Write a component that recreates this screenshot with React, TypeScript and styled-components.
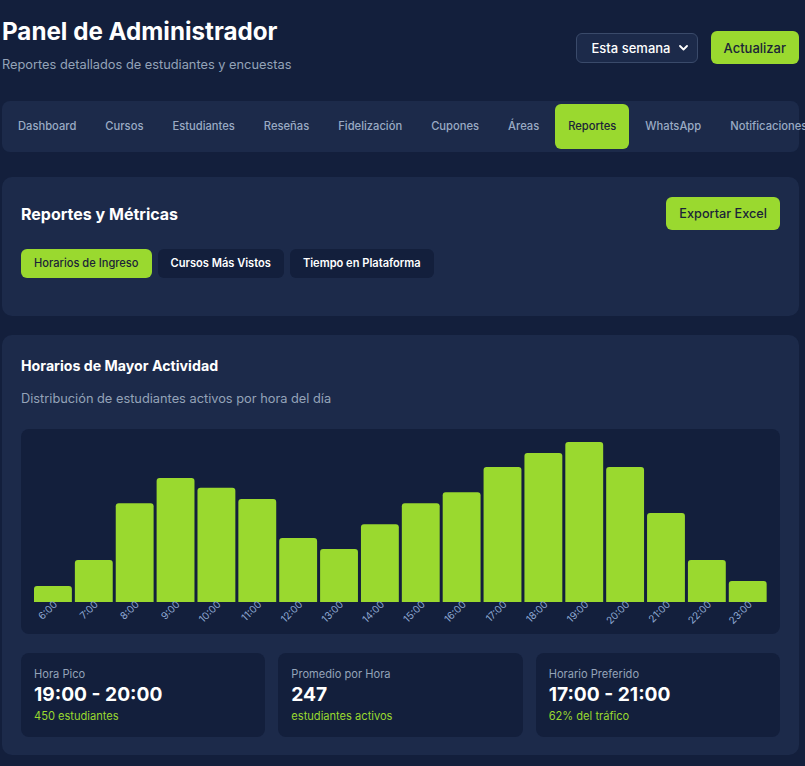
import React from 'react';
import styled, { createGlobalStyle } from 'styled-components';

const font = 'Inter, "Noto Sans", sans-serif';

const GlobalStyle = createGlobalStyle`
  html, body {
    margin: 0;
    padding: 0;
    background: #131f3c;
    overflow: hidden;
  }
  body {
    font-family: ${font};
    color: #fff;
  }
  * { box-sizing: border-box; }
`;

const Page = styled.div`
  width: 805px;
  padding: 16px 6px 0 2px;
`;

const Header = styled.header`
  display: flex;
  justify-content: space-between;
  align-items: center;
  margin-bottom: 26px;
`;

const Title = styled.h1`
  margin: 0;
  font-size: 24.2px;
  line-height: 32px;
  font-weight: 700;
`;

const Subtitle = styled.p`
  margin: 7px 0 0;
  font-size: 12.8px;
  line-height: 20px;
  color: #94a3b8;
`;

const Controls = styled.div`
  display: flex;
  align-items: center;
  gap: 13px;
  margin-top: 4px;
`;

const SelectWrap = styled.div`
  position: relative;
  width: 122px;
  height: 30px;
`;

const Select = styled.select`
  appearance: none;
  width: 100%;
  height: 100%;
  padding: 0 0 0 15px;
  background: #1c2a4a;
  border: 1px solid #3a4a6a;
  border-radius: 6px;
  color: #fff;
  font: 500 13px ${font};
  outline: none;
`;

const Chevron = styled.svg`
  position: absolute;
  right: 10px;
  top: 12px;
  pointer-events: none;
`;

const GreenButton = styled.button<{ $size: number }>`
  border: 0;
  border-radius: 6px;
  height: 33px;
  padding: 0 13px;
  background: #9ad92f;
  color: #1a2438;
  font: 500 ${({ $size }) => $size}px ${font};
  cursor: pointer;
`;

const Nav = styled.nav`
  display: flex;
  gap: 3px;
  padding: 3px;
  background: #1c2a4a;
  border-radius: 8px;
  margin-bottom: 25px;
`;

const NavItem = styled.button<{ $active?: boolean }>`
  flex-shrink: 0;
  border: 0;
  border-radius: 6px;
  padding: 14px 13px;
  font: 500 11.2px/17px ${font};
  white-space: nowrap;
  color: ${({ $active }) => ($active ? '#1a2438' : '#9aaac4')};
  background: ${({ $active }) => ($active ? '#9ad92f' : 'transparent')};
`;

const Card = styled.section<{ $bottom: number }>`
  background: #1c2a4a;
  border-radius: 10px;
  padding: 20px 19px ${({ $bottom }) => $bottom}px;
  margin-bottom: 19px;
`;

const CardHead = styled.div`
  display: flex;
  justify-content: space-between;
  align-items: center;
  min-height: 33px;
`;

const CardTitle = styled.h2<{ $size: number }>`
  margin: 0;
  font-size: ${({ $size }) => $size}px;
  line-height: 22px;
  font-weight: 700;
`;

const Tabs = styled.div`
  display: flex;
  gap: 6px;
  margin-top: 19px;
`;

const Tab = styled.button<{ $active?: boolean }>`
  border: 0;
  border-radius: 6px;
  padding: 7px 13px;
  font: ${({ $active }) => ($active ? 500 : 600)} 11.1px/15px ${font};
  color: ${({ $active }) => ($active ? '#1a2438' : '#fff')};
  background: ${({ $active }) => ($active ? '#9ad92f' : '#131f3c')};
`;

const CardText = styled.p`
  margin: 12px 0 20px;
  font-size: 12.8px;
  line-height: 20px;
  color: #94a3b8;
`;

const ChartBox = styled.div`
  background: #131f3c;
  border-radius: 8px;
  height: 205px;
`;

const StatGrid = styled.div`
  display: grid;
  grid-template-columns: repeat(3, 1fr);
  gap: 13px;
  margin-top: 19px;
`;

const StatCard = styled.div`
  background: #131f3c;
  border-radius: 8px;
  padding: 14px 13px 13px;
`;

const StatLabel = styled.div`
  font-size: 11.1px;
  line-height: 15px;
  color: #94a3b8;
`;

const StatValue = styled.div`
  font-size: 19.2px;
  line-height: 24px;
  font-weight: 700;
`;

const StatNote = styled.div`
  margin-top: 2px;
  font-size: 11.1px;
  line-height: 16px;
  color: #9ad92f;
`;

const navItems = [
  'Dashboard', 'Cursos', 'Estudiantes', 'Reseñas', 'Fidelización', 'Cupones',
  'Áreas', 'Reportes', 'WhatsApp', 'Notificaciones', 'Configuración',
];

const hours = [
  { h: '6:00', v: 45 }, { h: '7:00', v: 118 }, { h: '8:00', v: 278 },
  { h: '9:00', v: 349 }, { h: '10:00', v: 321 }, { h: '11:00', v: 290 },
  { h: '12:00', v: 180 }, { h: '13:00', v: 149 }, { h: '14:00', v: 219 },
  { h: '15:00', v: 278 }, { h: '16:00', v: 309 }, { h: '17:00', v: 380 },
  { h: '18:00', v: 419 }, { h: '19:00', v: 450 }, { h: '20:00', v: 380 },
  { h: '21:00', v: 250 }, { h: '22:00', v: 118 }, { h: '23:00', v: 59 },
];

const stats = [
  { label: 'Hora Pico', value: '19:00 - 20:00', note: '450 estudiantes' },
  { label: 'Promedio por Hora', value: '247', note: 'estudiantes activos' },
  { label: 'Horario Preferido', value: '17:00 - 21:00', note: '62% del tráfico' },
];

const BarChart = () => {
  const base = 173;
  const slot = 40.87;
  const w = 37.87;
  const r = 3;
  return (
    <svg width="759" height="205" viewBox="0 0 759 205">
      {hours.map((d, i) => {
        const x = 13 + i * slot;
        const h = (d.v / 450) * 160;
        const y = base - h;
        const cx = x + w / 2 + 5;
        return (
          <g key={d.h}>
            <path
              d={`M${x} ${base} V${y + r} Q${x} ${y} ${x + r} ${y} H${x + w - r} Q${x + w} ${y} ${x + w} ${y + r} V${base} Z`}
              fill="#9ad92f"
            />
            <text
              x={cx}
              y={176}
              textAnchor="end"
              fontSize="10"
              fill="#8ea8d2"
              fontFamily={font}
              transform={`rotate(-45 ${cx} 176)`}
            >
              {d.h}
            </text>
          </g>
        );
      })}
    </svg>
  );
};

export default function App() {
  return (
    <>
      <GlobalStyle />
      <Page>
        <Header>
          <div>
            <Title>Panel de Administrador</Title>
            <Subtitle>Reportes detallados de estudiantes y encuestas</Subtitle>
          </div>
          <Controls>
            <SelectWrap>
              <Select defaultValue="semana">
                <option value="semana">Esta semana</option>
                <option value="mes">Este mes</option>
              </Select>
              <Chevron width="9" height="6" viewBox="0 0 9 6">
                <path d="M1 1l3.5 3.5L8 1" stroke="#fff" strokeWidth="1.8" fill="none" strokeLinecap="round" strokeLinejoin="round" />
              </Chevron>
            </SelectWrap>
            <GreenButton $size={13}>Actualizar</GreenButton>
          </Controls>
        </Header>

        <Nav>
          {navItems.map((n) => (
            <NavItem key={n} $active={n === 'Reportes'}>{n}</NavItem>
          ))}
        </Nav>

        <Card $bottom={38}>
          <CardHead>
            <CardTitle $size={16}>Reportes y Métricas</CardTitle>
            <GreenButton $size={12.7}>Exportar Excel</GreenButton>
          </CardHead>
          <Tabs>
            <Tab $active>Horarios de Ingreso</Tab>
            <Tab>Cursos Más Vistos</Tab>
            <Tab>Tiempo en Plataforma</Tab>
          </Tabs>
        </Card>

        <Card $bottom={18}>
          <CardTitle $size={14.2}>Horarios de Mayor Actividad</CardTitle>
          <CardText>Distribución de estudiantes activos por hora del día</CardText>
          <ChartBox>
            <BarChart />
          </ChartBox>
          <StatGrid>
            {stats.map((s) => (
              <StatCard key={s.label}>
                <StatLabel>{s.label}</StatLabel>
                <StatValue>{s.value}</StatValue>
                <StatNote>{s.note}</StatNote>
              </StatCard>
            ))}
          </StatGrid>
        </Card>
      </Page>
    </>
  );
}
